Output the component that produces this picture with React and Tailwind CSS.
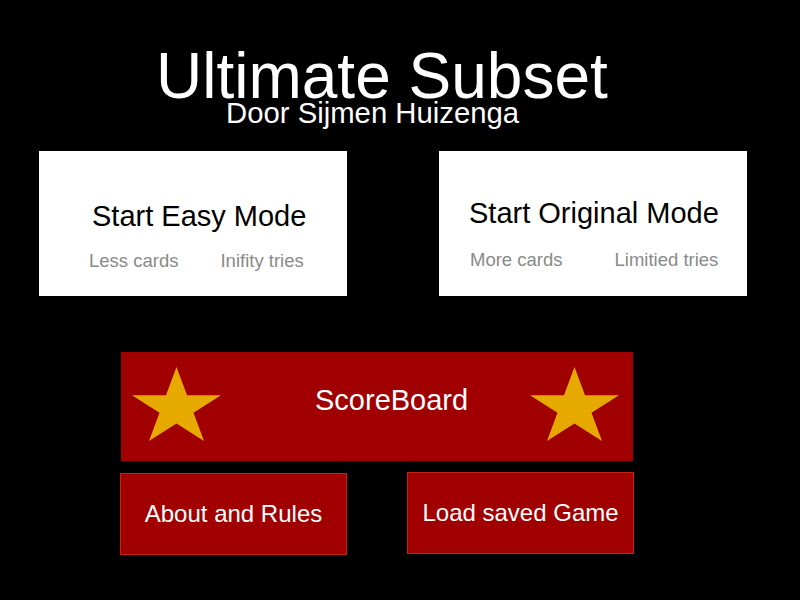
const Star = () => (
  <svg width="89" height="74" viewBox="-0.951 -1 1.902 1.809" preserveAspectRatio="none" className="shrink-0">
    <polygon
      points="0,-1 0.2245,-0.309 0.951,-0.309 0.363,0.118 0.588,0.809 0,0.382 -0.588,0.809 -0.363,0.118 -0.951,-0.309 -0.2245,-0.309"
      fill="#e5a900"
    />
  </svg>
);

const App = () => {
  return (
    <div className="w-[800px] h-[600px] bg-black overflow-hidden font-['Liberation_Sans',Arial,sans-serif]">
      {/* Header */}
      <div className="pt-[52px]">
        <h1 className="ml-[156px] text-[64px] leading-[48px] text-white whitespace-nowrap">Ultimate Subset</h1>
        <p className="ml-[226px] text-[29.3px] leading-[26px] text-white whitespace-nowrap">Door Sijmen Huizenga</p>
      </div>

      {/* Mode cards */}
      <div className="flex mt-[25px] pl-[39px] gap-[92px]">
        <div className="w-[308px] h-[145px] bg-white pt-[51px]">
          <div className="pl-[53px] text-[29px] leading-none text-black whitespace-nowrap">Start Easy Mode</div>
          <div className="flex pl-[50px] mt-[21px] gap-[42px] text-[18.5px] leading-none text-[#8a8a8a] whitespace-nowrap">
            <span>Less cards</span>
            <span>Inifity tries</span>
          </div>
        </div>
        <div className="w-[308px] h-[145px] bg-white pt-[48px]">
          <div className="pl-[30px] text-[29px] leading-none text-black whitespace-nowrap">Start Original Mode</div>
          <div className="flex pl-[31px] mt-[23px] gap-[52px] text-[18.5px] leading-none text-[#8a8a8a] whitespace-nowrap">
            <span>More cards</span>
            <span>Limitied tries</span>
          </div>
        </div>
      </div>

      {/* ScoreBoard */}
      <div className="ml-[121px] mt-[56px] w-[512px] h-[109px] bg-[#a00000] flex items-start">
        <div className="ml-[11px] mt-[15px]">
          <Star />
        </div>
        <div className="ml-[94px] mt-[34px] text-[29px] leading-none text-white whitespace-nowrap">ScoreBoard</div>
        <div className="ml-[62px] mt-[15px]">
          <Star />
        </div>
      </div>

      {/* Bottom buttons */}
      <div className="flex items-start mt-[12px] pl-[120px] gap-[60px]">
        <div className="w-[227px] h-[82px] bg-[#a00000] border border-[#c3240e] flex items-center justify-center text-[24px] text-white whitespace-nowrap">
          About and Rules
        </div>
        <div className="w-[227px] h-[82px] mt-[-1px] bg-[#a00000] border border-[#c3240e] flex items-center justify-center text-[24px] text-white whitespace-nowrap">
          Load saved Game
        </div>
      </div>
    </div>
  );
};

export default App;
